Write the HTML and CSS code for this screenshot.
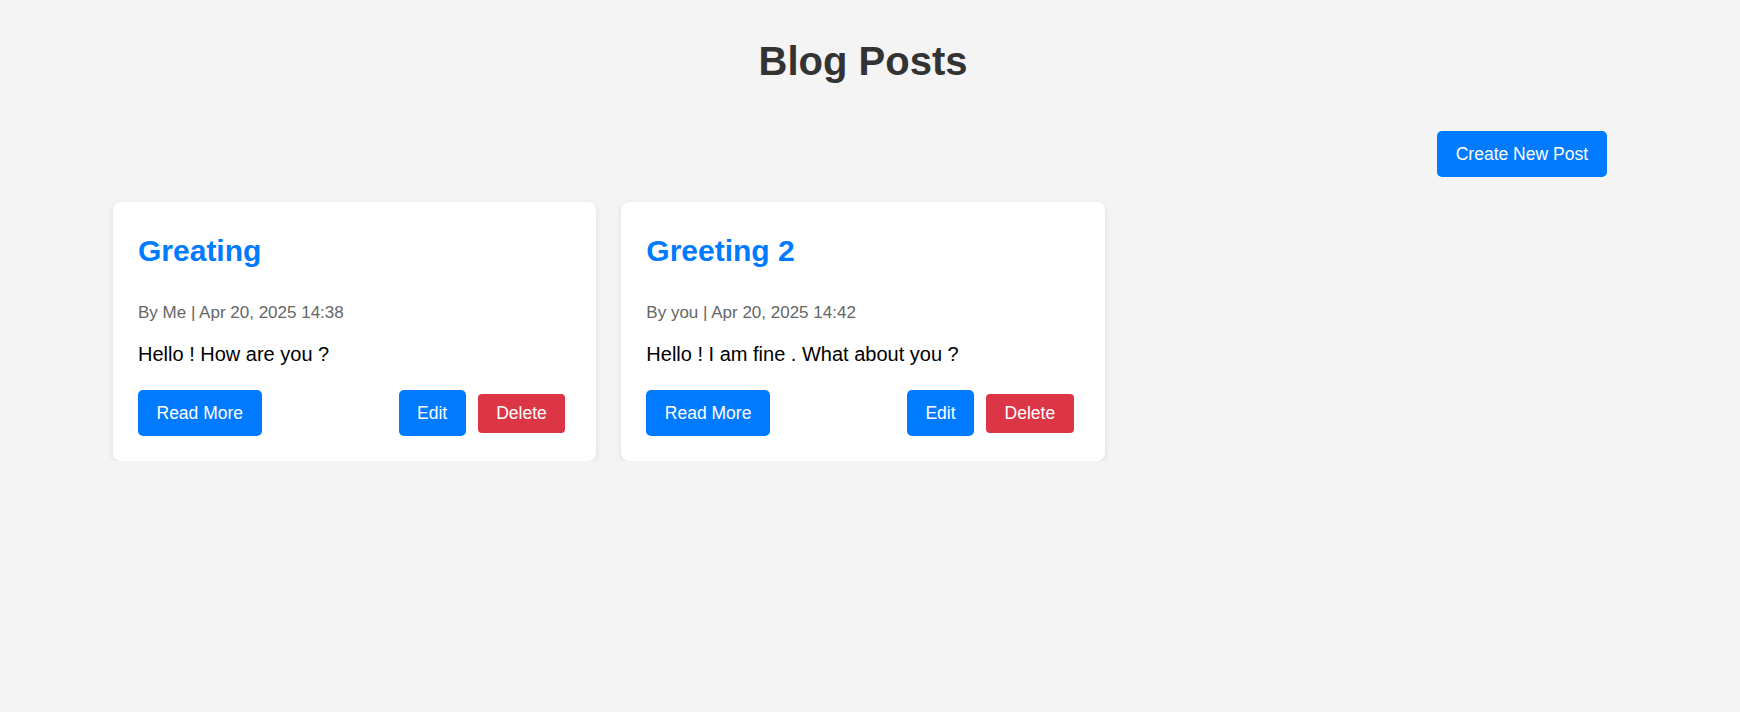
FILE: index.html
```html
<!DOCTYPE html>
<html lang="en">
<head>
<meta charset="utf-8">
<title>Blog Posts</title>
<link rel="stylesheet" href="styles.css">
</head>
<body>
<div class="container">
  <h1 class="page-title">Blog Posts</h1>
  <div class="toolbar">
    <a class="btn" href="#">Create New Post</a>
  </div>
  <div class="grid">
    <div class="card">
      <h2 class="card-title">Greating</h2>
      <p class="meta">By Me | Apr 20, 2025 14:38</p>
      <p class="excerpt">Hello ! How are you ?</p>
      <div class="actions">
        <a class="btn" href="#">Read More</a>
        <div class="right-group">
          <a class="btn" href="#">Edit</a>
          <button class="btn btn-danger" type="button">Delete</button>
        </div>
      </div>
    </div>
    <div class="card">
      <h2 class="card-title">Greeting 2</h2>
      <p class="meta">By you | Apr 20, 2025 14:42</p>
      <p class="excerpt">Hello ! I am fine . What about you ?</p>
      <div class="actions">
        <a class="btn" href="#">Read More</a>
        <div class="right-group">
          <a class="btn" href="#">Edit</a>
          <button class="btn btn-danger" type="button">Delete</button>
        </div>
      </div>
    </div>
  </div>
</div>
</body>
</html>
```
FILE: styles.css
```css
html, body {
  margin: 0;
  padding: 0;
}
body {
  background: #f4f4f4;
  font-family: "Liberation Sans", Arial, sans-serif;
  color: #000;
}
.container {
  width: 1500px;
  margin-left: 113px;
  padding-top: 38px;
}
.page-title {
  margin: 0;
  font-size: 40px;
  line-height: 46px;
  font-weight: bold;
  text-align: center;
  color: #333;
}
.toolbar {
  display: flex;
  justify-content: flex-end;
  margin-top: 47px;
  padding-right: 6.5px;
}
.btn {
  display: inline-block;
  font-family: "Liberation Sans", Arial, sans-serif;
  font-size: 17.5px;
  line-height: 20px;
  padding: 13px 18.5px;
  border: none;
  border-radius: 5px;
  background: #007bff;
  color: #fff;
  text-decoration: none;
  cursor: pointer;
}
.btn-danger {
  background: #dc3545;
  padding: 9.5px 18.5px;
  border-radius: 4px;
}
.grid {
  margin-top: 25px;
  display: grid;
  grid-template-columns: repeat(3, 1fr);
  gap: 25px;
}
.card {
  background: #fff;
  border-radius: 8px;
  padding: 25px;
  box-shadow: 0 2px 6px rgba(0, 0, 0, 0.1);
}
.card-title {
  margin: 7px 0 0;
  font-size: 30px;
  line-height: 34px;
  font-weight: bold;
  color: #007bff;
}
.meta {
  margin: 35px 0 0;
  font-size: 17px;
  line-height: 20px;
  color: #666;
}
.excerpt {
  margin: 20px 0 0;
  font-size: 20px;
  line-height: 23px;
  color: #000;
}
.actions {
  margin-top: 24px;
  display: flex;
  justify-content: space-between;
  align-items: center;
}
.right-group {
  display: flex;
  align-items: center;
  gap: 12px;
  margin-right: 6px;
}
```
